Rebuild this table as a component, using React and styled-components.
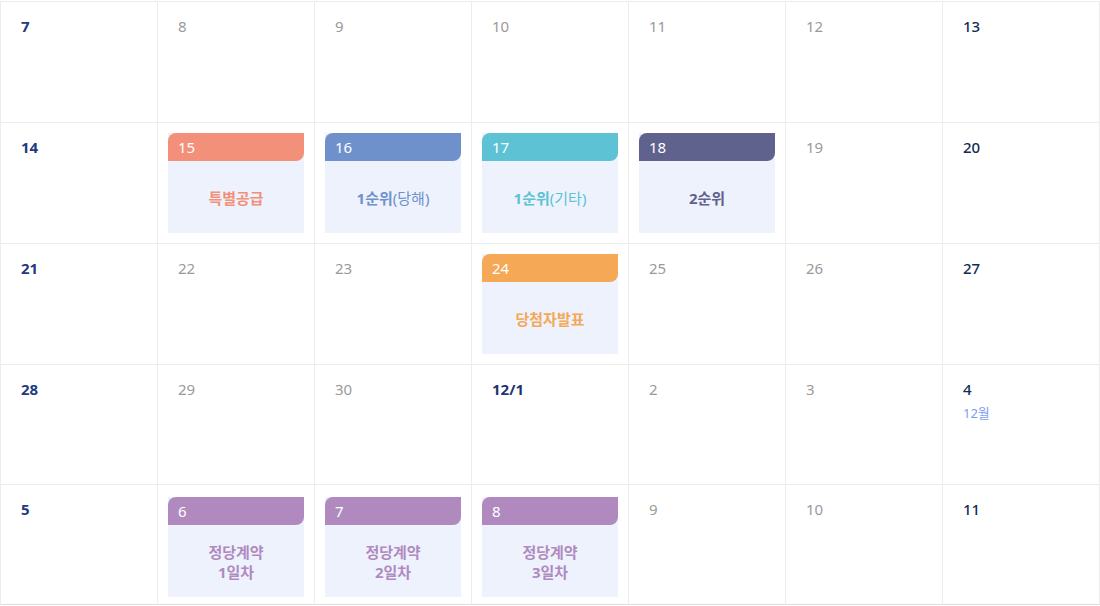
import React from 'react'
import styled, { createGlobalStyle } from 'styled-components'

const GlobalStyle = createGlobalStyle`
  html, body {
    margin: 0;
    padding: 0;
    background: #fff;
  }
  body {
    font-family: 'Noto Sans', 'Noto Sans CJK KR', sans-serif;
  }
`

const COLORS = {
  special: '#f29079',
  first: '#6e91cb',
  other: '#5cc2d4',
  second: '#5f628d',
  winner: '#f5a855',
  contract: '#b08abf'
}

const Calendar = styled.div`
  width: 1100px;
  box-sizing: border-box;
  margin-top: 1px;
  border-top: 1px solid #ececec;
  border-left: 1px solid #ececec;
  display: grid;
  grid-template-columns: repeat(7, 1fr);
  grid-template-rows: 121px 121px 121px 120px 120px;
`

const Cell = styled.div`
  box-sizing: border-box;
  border-right: 1px solid #ececec;
  border-bottom: 1px solid ${({ last }) => (last ? '#dcdcdc' : '#ececec')};
  padding: ${({ event, last }) =>
    event ? (last ? '12px 10px 0' : '10px 10px 0') : '14px 20px 0'};
  min-width: 0;
`

const DayNum = styled.div`
  font-size: 15px;
  line-height: 20px;
  color: ${({ kind }) =>
    (kind === 'sun' && '#213a80') ||
    (kind === 'sat' && '#0f2d55') ||
    (kind === 'month' && '#1f3472') ||
    '#9a9a9a'};
  font-weight: ${({ kind }) =>
    (kind === 'sun' && 700) ||
    (kind === 'month' && 700) ||
    (kind === 'sat' && 500) ||
    400};
`

const MonthNote = styled.div`
  font-size: 13px;
  line-height: 18px;
  margin-top: 5px;
  color: #7d9df0;
`

const EventBox = styled.div`
  display: flex;
  flex-direction: column;
  height: 100px;
  background: #eef2fd;
`

const EventHead = styled.div`
  height: 28px;
  display: flex;
  align-items: center;
  padding-left: 10px;
  background: ${({ color }) => color};
  border-radius: 8px 0 8px 0;
  color: #fff;
  font-size: 15px;
`

const EventBody = styled.div`
  flex: 1;
  display: flex;
  flex-direction: column;
  align-items: center;
  justify-content: center;
  padding-top: 2px;
  color: ${({ color }) => color};
  font-size: 15px;
  line-height: 20px;
  text-align: center;
`

const Strong = styled.span`
  font-weight: 700;
`

const Light = styled.span`
  font-weight: 400;
`

const ev = (color, ...lines) => ({ color, lines })

const weeks = [
  [
    { n: '7', k: 'sun' },
    { n: '8' },
    { n: '9' },
    { n: '10' },
    { n: '11' },
    { n: '12' },
    { n: '13', k: 'sat' }
  ],
  [
    { n: '14', k: 'sun' },
    { n: '15', e: ev(COLORS.special, [['특별공급', 1]]) },
    { n: '16', e: ev(COLORS.first, [['1순위', 1], ['(당해)', 0]]) },
    { n: '17', e: ev(COLORS.other, [['1순위', 1], ['(기타)', 0]]) },
    { n: '18', e: ev(COLORS.second, [['2순위', 1]]) },
    { n: '19' },
    { n: '20', k: 'sat' }
  ],
  [
    { n: '21', k: 'sun' },
    { n: '22' },
    { n: '23' },
    { n: '24', e: ev(COLORS.winner, [['당첨자발표', 1]]) },
    { n: '25' },
    { n: '26' },
    { n: '27', k: 'sat' }
  ],
  [
    { n: '28', k: 'sun' },
    { n: '29' },
    { n: '30' },
    { n: '12/1', k: 'month' },
    { n: '2' },
    { n: '3' },
    { n: '4', k: 'sat', note: '12월' }
  ],
  [
    { n: '5', k: 'sun' },
    { n: '6', e: ev(COLORS.contract, [['정당계약', 1]], [['1일차', 1]]) },
    { n: '7', e: ev(COLORS.contract, [['정당계약', 1]], [['2일차', 1]]) },
    { n: '8', e: ev(COLORS.contract, [['정당계약', 1]], [['3일차', 1]]) },
    { n: '9' },
    { n: '10' },
    { n: '11', k: 'sat' }
  ]
]

const Day = ({ day, last }) => {
  if (day.e) {
    return (
      <Cell event last={last}>
        <EventBox>
          <EventHead color={day.e.color}>{day.n}</EventHead>
          <EventBody color={day.e.color}>
            {day.e.lines.map((line, i) => (
              <div key={i}>
                {line.map(([t, b], j) =>
                  b ? <Strong key={j}>{t}</Strong> : <Light key={j}>{t}</Light>
                )}
              </div>
            ))}
          </EventBody>
        </EventBox>
      </Cell>
    )
  }
  return (
    <Cell last={last}>
      <DayNum kind={day.k}>{day.n}</DayNum>
      {day.note && <MonthNote>{day.note}</MonthNote>}
    </Cell>
  )
}

export default function App() {
  return (
    <>
      <GlobalStyle />
      <Calendar>
        {weeks.map((week, w) =>
          week.map((day, d) => (
            <Day key={`${w}-${d}`} day={day} last={w === weeks.length - 1} />
          ))
        )}
      </Calendar>
    </>
  )
}
